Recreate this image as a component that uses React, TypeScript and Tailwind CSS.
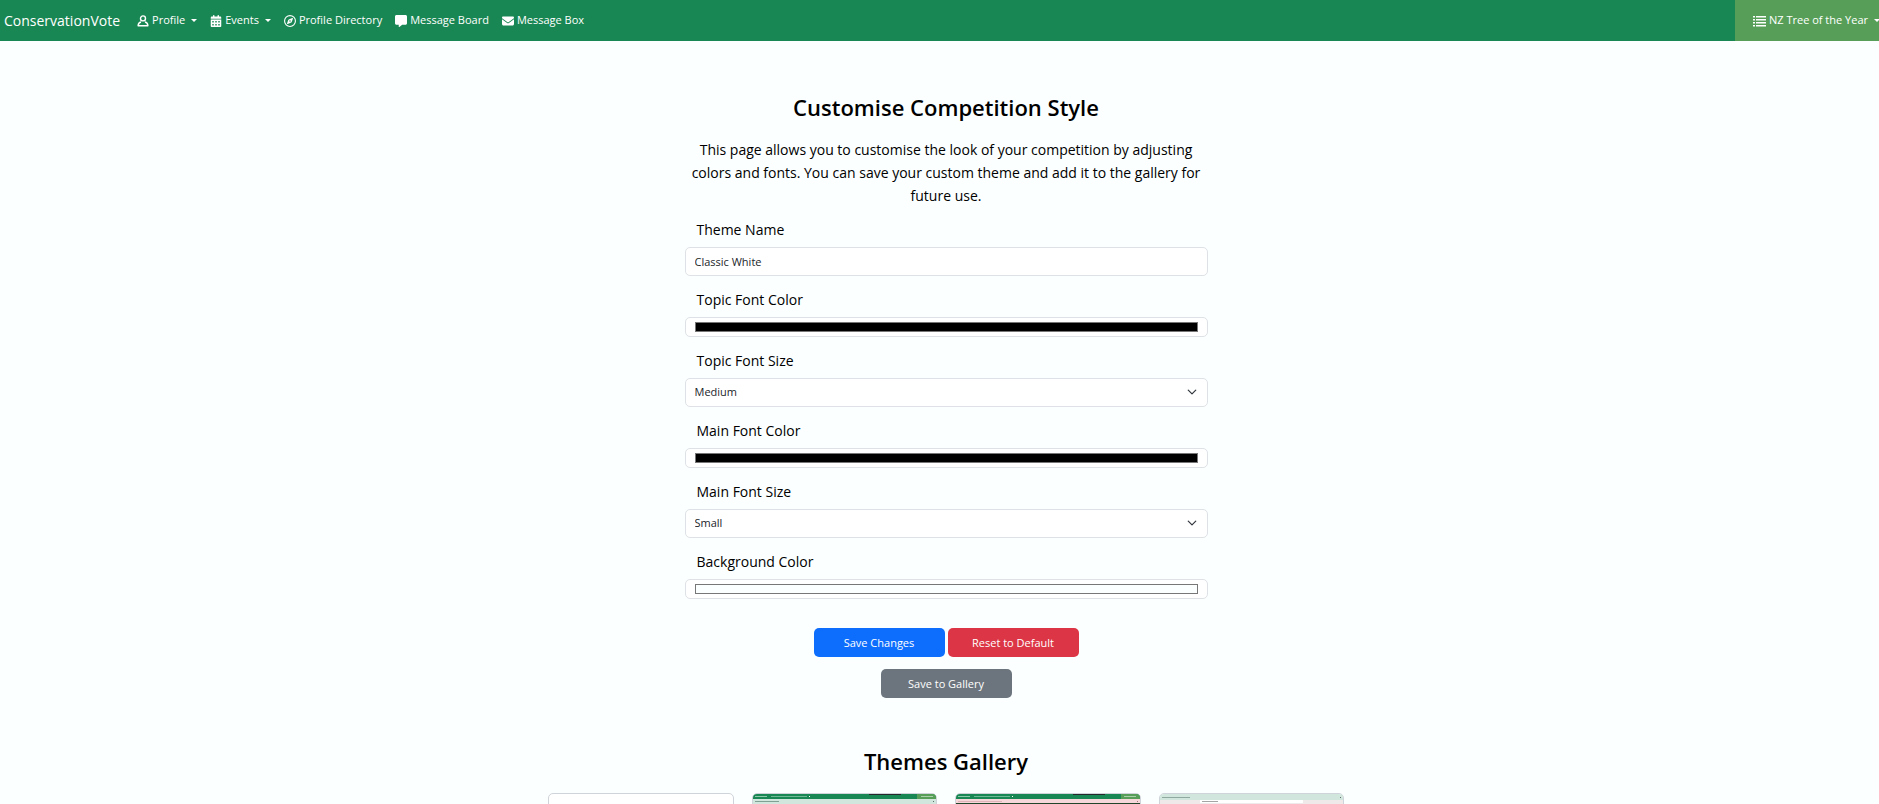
import type { ReactNode } from "react";
import { useState } from "react";
import { FaCalendarDays, FaRegCompass, FaMessage, FaEnvelope } from "react-icons/fa6";

const Caret = () => (
  <span className="ml-[3px] h-0 w-0 border-x-[3px] border-t-[3px] border-x-transparent border-t-white" />
);

const UserIcon = () => (
  <svg viewBox="0 0 12 12" className="h-3 w-3" fill="none" stroke="currentColor" strokeWidth="1.4">
    <circle cx="6" cy="3.4" r="2.5" />
    <path d="M4 7C2.2 7.4 1.2 8.6 1.1 10.8h9.8C10.8 8.6 9.8 7.4 8 7" strokeLinejoin="round" />
  </svg>
);

const ListIcon = () => (
  <svg viewBox="0 0 13 12" className="h-3 w-[13px]" fill="currentColor">
    <path d="M0 1h2v1.6H0zM0 4h2v1.6H0zM0 7h2v1.6H0zM0 10h2v1.4H0zM3 1h10v1.6H3zM3 4h10v1.6H3zM3 7h10v1.6H3zM3 10h10v1.4H3z" />
  </svg>
);

function NavItem({ icon, label, menu }: { icon: ReactNode; label: string; menu?: boolean }) {
  const inner = (
    <>
      {icon}
      <span>{label}</span>
    </>
  );
  return (
    <li>
      {menu ? (
        <button type="button" className="flex items-center gap-[3px] whitespace-nowrap">
          {inner}
          <Caret />
        </button>
      ) : (
        <a href="#" className="flex items-center gap-[3px] whitespace-nowrap">
          {inner}
        </a>
      )}
    </li>
  );
}

const labelClass = "mb-[6px] block px-3 text-[14px] leading-[22px]";
const controlClass =
  "block w-full rounded-[5px] border border-[#dee2e6] bg-white px-[9px] text-[#212529]";

function ColorField({ id, label, initial }: { id: string; label: string; initial: string }) {
  const [value, setValue] = useState(initial);
  return (
    <div>
      <label htmlFor={id} className={labelClass}>
        {label}
      </label>
      <input
        id={id}
        type="color"
        value={value}
        onChange={(e) => setValue(e.target.value)}
        className={`${controlClass} h-5 appearance-none py-1 [&::-webkit-color-swatch]:rounded-none [&::-webkit-color-swatch]:border [&::-webkit-color-swatch]:border-[#777777] [&::-webkit-color-swatch-wrapper]:p-0`}
      />
    </div>
  );
}

function SizeField({ id, label, initial }: { id: string; label: string; initial: string }) {
  return (
    <div>
      <label htmlFor={id} className={labelClass}>
        {label}
      </label>
      <div className="relative">
        <select
          id={id}
          defaultValue={initial}
          className={`${controlClass} h-[29px] appearance-none text-[11px]`}
        >
          <option>Small</option>
          <option>Medium</option>
          <option>Large</option>
        </select>
        <svg
          viewBox="0 0 16 16"
          className="pointer-events-none absolute top-[9px] right-[11px] h-[10px] w-[10px]"
          fill="none"
          stroke="#343a40"
          strokeWidth="2"
          strokeLinecap="round"
          strokeLinejoin="round"
        >
          <path d="m2 5 6 6 6-6" />
        </svg>
      </div>
    </div>
  );
}

const cardClass = "h-32 overflow-hidden rounded-[5px] border border-[#ced4da] bg-white";
const buttonClass = "h-[29px] w-[131px] rounded-[5px] pt-px text-[11px] text-white";

function MiniNav() {
  return (
    <div className="flex h-[5px] items-center bg-[#198754]">
      <div className="ml-[2px] h-px w-3 bg-[#8fc9ac]" />
      <div className="ml-1 h-px w-9 bg-[#6fb896]" />
      <div className="ml-[2px] h-px w-px bg-white" />
      <div className="mr-4 ml-auto h-px w-8 self-start bg-[#25282b]" />
      <div className="flex h-full w-[19px] items-center justify-center bg-[#579f58]">
        <div className="h-px w-3 bg-[#a9d0a9]" />
      </div>
    </div>
  );
}

export default function App() {
  return (
    <div className="h-screen overflow-hidden bg-[#fbffff] font-['Open_Sans','Noto_Sans',sans-serif] text-black">
      <header className="-mr-[5px] flex h-[41px] items-center bg-[#198754] pl-1 text-[11px] text-white">
        <a href="#" className="text-[14px] whitespace-nowrap">
          ConservationVote
        </a>
        <nav className="ml-[17px]">
          <ul className="flex items-center gap-[13px]">
            <NavItem icon={<UserIcon />} label="Profile" menu />
            <NavItem icon={<FaCalendarDays size={12} />} label="Events" menu />
            <NavItem icon={<FaRegCompass size={12} />} label="Profile Directory" />
            <NavItem icon={<FaMessage size={12} />} label="Message Board" />
            <NavItem icon={<FaEnvelope size={12} />} label="Message Box" />
          </ul>
        </nav>
        <button
          type="button"
          className="ml-auto flex h-full items-center gap-[3px] bg-[#579f58] pr-1 pl-[18px] whitespace-nowrap"
        >
          <ListIcon />
          <span>NZ Tree of the Year</span>
          <Caret />
        </button>
      </header>

      <main className="flex flex-col items-center pt-[51px] pl-[13px]">
        <div className="w-full max-w-[523px]">
          <h1 className="text-center text-[22px] leading-[30px] font-semibold">
            Customise Competition Style
          </h1>
          <p className="mt-4 text-center text-[14px] leading-[23px]">
            This page allows you to customise the look of your competition by adjusting colors and
            fonts. You can save your custom theme and add it to the gallery for future use.
          </p>
          <form className="mt-3" onSubmit={(e) => e.preventDefault()}>
            <div className="flex flex-col gap-[13px]">
              <div>
                <label htmlFor="theme-name" className={labelClass}>
                  Theme Name
                </label>
                <input
                  id="theme-name"
                  type="text"
                  defaultValue="Classic White"
                  className={`${controlClass} h-[29px] text-[11px]`}
                />
              </div>
              <ColorField id="topic-color" label="Topic Font Color" initial="#000000" />
              <SizeField id="topic-size" label="Topic Font Size" initial="Medium" />
              <ColorField id="main-color" label="Main Font Color" initial="#000000" />
              <SizeField id="main-size" label="Main Font Size" initial="Small" />
              <ColorField id="background-color" label="Background Color" initial="#fbffff" />
            </div>
            <div className="mt-[29px] flex flex-wrap justify-center gap-x-[3px] gap-y-3">
              <button type="submit" className={`${buttonClass} bg-[#0d6efd]`}>
                Save Changes
              </button>
              <button type="reset" className={`${buttonClass} bg-[#dc3545]`}>
                Reset to Default
              </button>
              <div className="flex w-full justify-center">
                <button type="button" className={`${buttonClass} bg-[#6c757d]`}>
                  Save to Gallery
                </button>
              </div>
            </div>
          </form>
        </div>

        <section className="mt-12 w-full max-w-[796px]">
          <h2 className="text-center text-[22px] leading-[30px] font-semibold">Themes Gallery</h2>
          <div className="mt-[17px] grid grid-cols-4 gap-[18px]">
            <div className={cardClass} />
            <div className={cardClass}>
              <MiniNav />
              <div className="flex h-full items-start justify-between bg-[#d1e7dd] px-[2px] pt-[2px]">
                <div className="h-px w-6 bg-[#7fa093]" />
                <div className="h-px w-px bg-[#5b7068]" />
              </div>
            </div>
            <div className={cardClass}>
              <MiniNav />
              <div className="flex h-[4px] items-center justify-between bg-[#f8d7da] px-[2px]">
                <div className="h-px w-11 bg-[#e0b3b8]" />
                <div className="h-px w-px bg-[#a67278]" />
              </div>
              <div className="h-full bg-[#21452b]" />
            </div>
            <div className={cardClass}>
              <div className="flex h-[6px] items-center justify-between bg-[#d1e7dd] px-[2px]">
                <div className="h-px w-7 bg-[#8fa99e]" />
                <div className="h-px w-px bg-[#5b7068]" />
              </div>
              <div className="h-full bg-[#f0e9ea]">
                <div className="mx-auto flex h-[3px] w-[103px] items-center bg-white pl-[2px]">
                  <div className="h-px w-4 bg-[#a5a5a5]" />
                </div>
              </div>
            </div>
          </div>
        </section>
      </main>
    </div>
  );
}
